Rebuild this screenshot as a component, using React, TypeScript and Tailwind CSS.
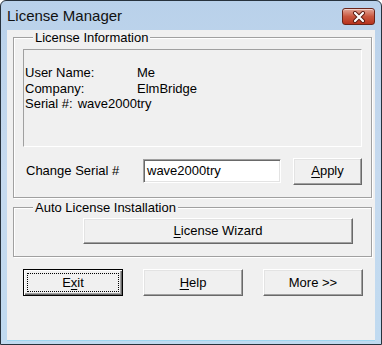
import React from "react";

const raised =
  "border border-t-white border-l-white border-b-[#696969] border-r-[#696969] shadow-[inset_-1px_-1px_0_#a0a0a0,inset_1px_1px_0_#e3e3e3] bg-[#f0f0f0]";

function Btn({ children, className = "" }: { children: React.ReactNode; className?: string }) {
  return (
    <button className={`${raised} flex items-center justify-center text-[13px] text-black ${className}`}>
      {children}
    </button>
  );
}

function Group({ title, children, className = "" }: { title: string; children: React.ReactNode; className?: string }) {
  return (
    <fieldset
      className={`border border-[#a0a0a0] shadow-[inset_1px_1px_0_#fff,1px_1px_0_#fff] px-[9px] ${className}`}
    >
      <legend className="ml-[10px] px-[2px] bg-[#f0f0f0] leading-[15px] text-[13px] text-black">{title}</legend>
      {children}
    </fieldset>
  );
}

export default function App() {
  return (
    <div
      className="w-[382px] h-[345px] flex flex-col border border-[#27323d] rounded-t-[6px] bg-gradient-to-b from-[#b9d1ea] via-[#c6daef] to-[#c0daf0] px-[6px]"
      style={{ fontFamily: '"Liberation Sans", Arial, sans-serif' }}
    >
      {/* title bar */}
      <div className="h-[29px] flex items-start shrink-0">
        <span className="mt-[6px] text-[15px] leading-[18px] text-[#111]">License Manager</span>
        <div className="ml-auto mt-[7px] w-[33px] h-[17px] rounded-[3px] border border-[#6b2418] bg-gradient-to-b from-[#e2a496] via-[#c9573f] to-[#b8321d] flex items-center justify-center shadow-[inset_0_1px_0_rgba(255,255,255,0.5)]">
          <svg width="14" height="12" viewBox="0 0 14 12">
            <path d="M3 2 L11 10 M11 2 L3 10" stroke="#5a1a10" strokeWidth="4" strokeLinecap="round" />
            <path d="M3 2 L11 10 M11 2 L3 10" stroke="#fff" strokeWidth="2.2" strokeLinecap="round" />
          </svg>
        </div>
      </div>

      {/* client */}
      <div className="flex-1 bg-[#f0f0f0] flex flex-col text-[13px] text-black">
        <Group title="License Information" className="ml-[6px] w-[359px] h-[168px]">
          <div className="mt-[4px] h-[98px] border border-t-[#a0a0a0] border-l-[#a0a0a0] border-b-white border-r-white pt-[15px] pl-[1px] leading-[15.5px]">
            <div className="flex">
              <span className="w-[112px]">User Name:</span>
              <span>Me</span>
            </div>
            <div className="flex">
              <span className="w-[112px]">Company:</span>
              <span>ElmBridge</span>
            </div>
            <div className="flex">
              <span>Serial #:</span>
              <span className="ml-[5px]">wave2000try</span>
            </div>
          </div>
          <div className="mt-[10px] flex items-center h-[28px]">
            <span className="ml-[3px] w-[117px]">Change Serial #</span>
            <div className="w-[138px] h-[24px] bg-white border border-t-[#a0a0a0] border-l-[#a0a0a0] border-b-white border-r-white shadow-[inset_1px_1px_0_#696969,inset_-1px_-1px_0_#e3e3e3] flex items-center pl-[3px]">
              wave2000try
            </div>
            <Btn className="ml-auto w-[69px] h-[27px]">
              <span>
                <u className="underline-offset-2">A</u>pply
              </span>
            </Btn>
          </div>
        </Group>

        <Group title="Auto License Installation" className="ml-[6px] mt-[2px] w-[359px] h-[57px]">
          <Btn className="mt-[3px] ml-[60px] w-[270px] h-[26px]">
            <span>
              <u className="underline-offset-2">L</u>icense Wizard
            </span>
          </Btn>
        </Group>

        <div className="mt-[12px] ml-[16px] flex gap-[20px]">
          <button className="w-[100px] h-[27px] border border-black bg-[#f0f0f0] shadow-[inset_1px_1px_0_#fff,inset_-1px_-1px_0_#696969,inset_-2px_-2px_0_#a0a0a0] p-[3px] flex">
            <span className="flex-1 border border-dotted border-black flex items-center justify-center text-[13px]">
              <span>
                E<u className="underline-offset-2">x</u>it
              </span>
            </span>
          </button>
          <Btn className="w-[100px] h-[27px]">
            <span>
              <u className="underline-offset-2">H</u>elp
            </span>
          </Btn>
          <Btn className="w-[100px] h-[27px]">
            <span>More &gt;&gt;</span>
          </Btn>
        </div>
      </div>
      <div className="h-[4px] shrink-0 border-t border-[#9fd6f0]" />
    </div>
  );
}
